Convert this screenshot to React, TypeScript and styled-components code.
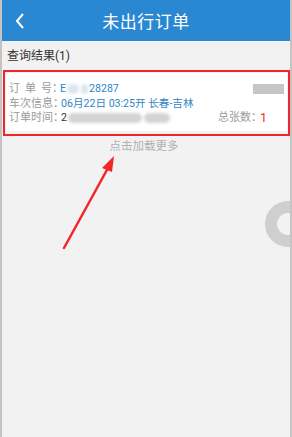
import React from 'react';
import styled, { createGlobalStyle } from 'styled-components';

const GlobalStyle = createGlobalStyle`
  html, body {
    margin: 0;
    padding: 0;
    background: #f2f2f2;
  }
  * {
    box-sizing: border-box;
  }
`;

const Page = styled.div`
  position: relative;
  width: 292px;
  height: 437px;
  overflow: hidden;
  background: #f2f2f2;
  font-family: Roboto, "Noto Sans CJK SC", sans-serif;
  border-left: 2px solid #c4c4c4;
  border-right: 2px solid #c4c4c4;
`;

const Header = styled.div`
  height: 41px;
  margin: 0 -2px;
  background: #2a88d2;
  display: flex;
  align-items: center;
  justify-content: center;
  position: relative;
`;

const BackButton = styled.div`
  position: absolute;
  left: 14px;
  top: 12px;
  width: 12px;
  height: 18px;
`;

const Title = styled.h1`
  margin: 0;
  color: #fff;
  font-size: 17px;
  font-weight: 400;
  letter-spacing: 0.5px;
`;

const SectionTitle = styled.div`
  padding: 6px 5px 0;
  height: 29px;
  font-size: 12px;
  color: #333;
  line-height: 18px;
`;

const RedFrame = styled.div`
  margin-left: 1px;
  width: 287px;
  border: 2px solid #f2262a;
  padding: 1px 1px 3px;
`;

const Card = styled.div`
  background: #fff;
  padding: 9px 2px 5px 3px;
  display: flex;
  flex-direction: column;
`;

const Row = styled.div`
  display: flex;
  align-items: center;
  height: 14.5px;
  font-size: 11px;
  line-height: 14px;
  white-space: nowrap;
`;

const Label = styled.span`
  color: #9a9a9a;
  display: flex;
  align-items: center;
`;

const Spaced = styled.span`
  letter-spacing: 5px;
`;

const Colon = styled.span`
  letter-spacing: -5px;
  margin-right: 2px;
`;

const Value = styled.span<{ $dark?: boolean }>`
  color: ${(p) => (p.$dark ? '#333' : '#2f86c3')};
  font-size: 10.6px;
  display: flex;
  align-items: center;
`;

const Blur = styled.span<{ $w: number; $dark?: boolean }>`
  display: inline-block;
  width: ${(p) => p.$w}px;
  height: 10px;
  border-radius: 5px;
  background: ${(p) => (p.$dark ? '#d4d4d4' : '#dce6ef')};
  filter: blur(1.5px);
  margin: 0 1px;
`;

const Spacer = styled.div`
  flex: 1;
`;

const GrayBlock = styled.span`
  display: inline-block;
  width: 31px;
  height: 10px;
  background: #c6c6c6;
  filter: blur(0.4px);
  margin-right: 1px;
`;

const Count = styled.span`
  color: #9a9a9a;
  margin-right: 18px;
  display: flex;
  align-items: center;
`;

const Red = styled.span`
  color: #f2262a;
  font-size: 12.5px;
  margin-left: 1px;
`;

const LoadMore = styled.div`
  text-align: center;
  font-size: 11.5px;
  line-height: 14px;
  color: #b0b0b0;
  padding-top: 3.5px;
  padding-right: 4px;
`;

const Overlay = styled.svg`
  position: absolute;
  left: -2px;
  top: 0;
  pointer-events: none;
`;

export default function App() {
  return (
    <>
      <GlobalStyle />
      <Page>
        <Header>
          <BackButton>
            <svg width="12" height="18" viewBox="0 0 12 18">
              <path d="M9 2 L3 9 L9 16" fill="none" stroke="#fff" strokeWidth="2" />
            </svg>
          </BackButton>
          <Title>未出行订单</Title>
        </Header>
        <SectionTitle>查询结果(1)</SectionTitle>
        <RedFrame>
          <Card>
            <Row>
              <Label>
                <Spaced>订单</Spaced>号<Colon>：</Colon>
              </Label>
              <Value>
                E<Blur $w={12} />
                <Blur $w={7} />28287
              </Value>
              <Spacer />
              <GrayBlock />
            </Row>
            <Row>
              <Label>
                车次信息<Colon>：</Colon>
              </Label>
              <Value>06月22日 03:25开 长春-吉林</Value>
            </Row>
            <Row>
              <Label>
                订单时间<Colon>：</Colon>
              </Label>
              <Value $dark>
                2<Blur $w={74} $dark />
                <Blur $w={26} $dark />
              </Value>
              <Spacer />
              <Count>
                总张数<Colon>：</Colon>
                <Red>1</Red>
              </Count>
            </Row>
          </Card>
        </RedFrame>
        <LoadMore>点击加载更多</LoadMore>
        <Overlay width="292" height="437" viewBox="0 0 292 437">
          <circle cx="288" cy="224" r="17" fill="none" stroke="#cfcfcf" strokeWidth="12" />
          <path d="M64 248 L108 168" stroke="#f2262a" strokeWidth="2.5" strokeLinecap="round" />
          <path d="M114 156 L102 168 L112 172 Z" fill="#f2262a" />
        </Overlay>
      </Page>
    </>
  );
}
